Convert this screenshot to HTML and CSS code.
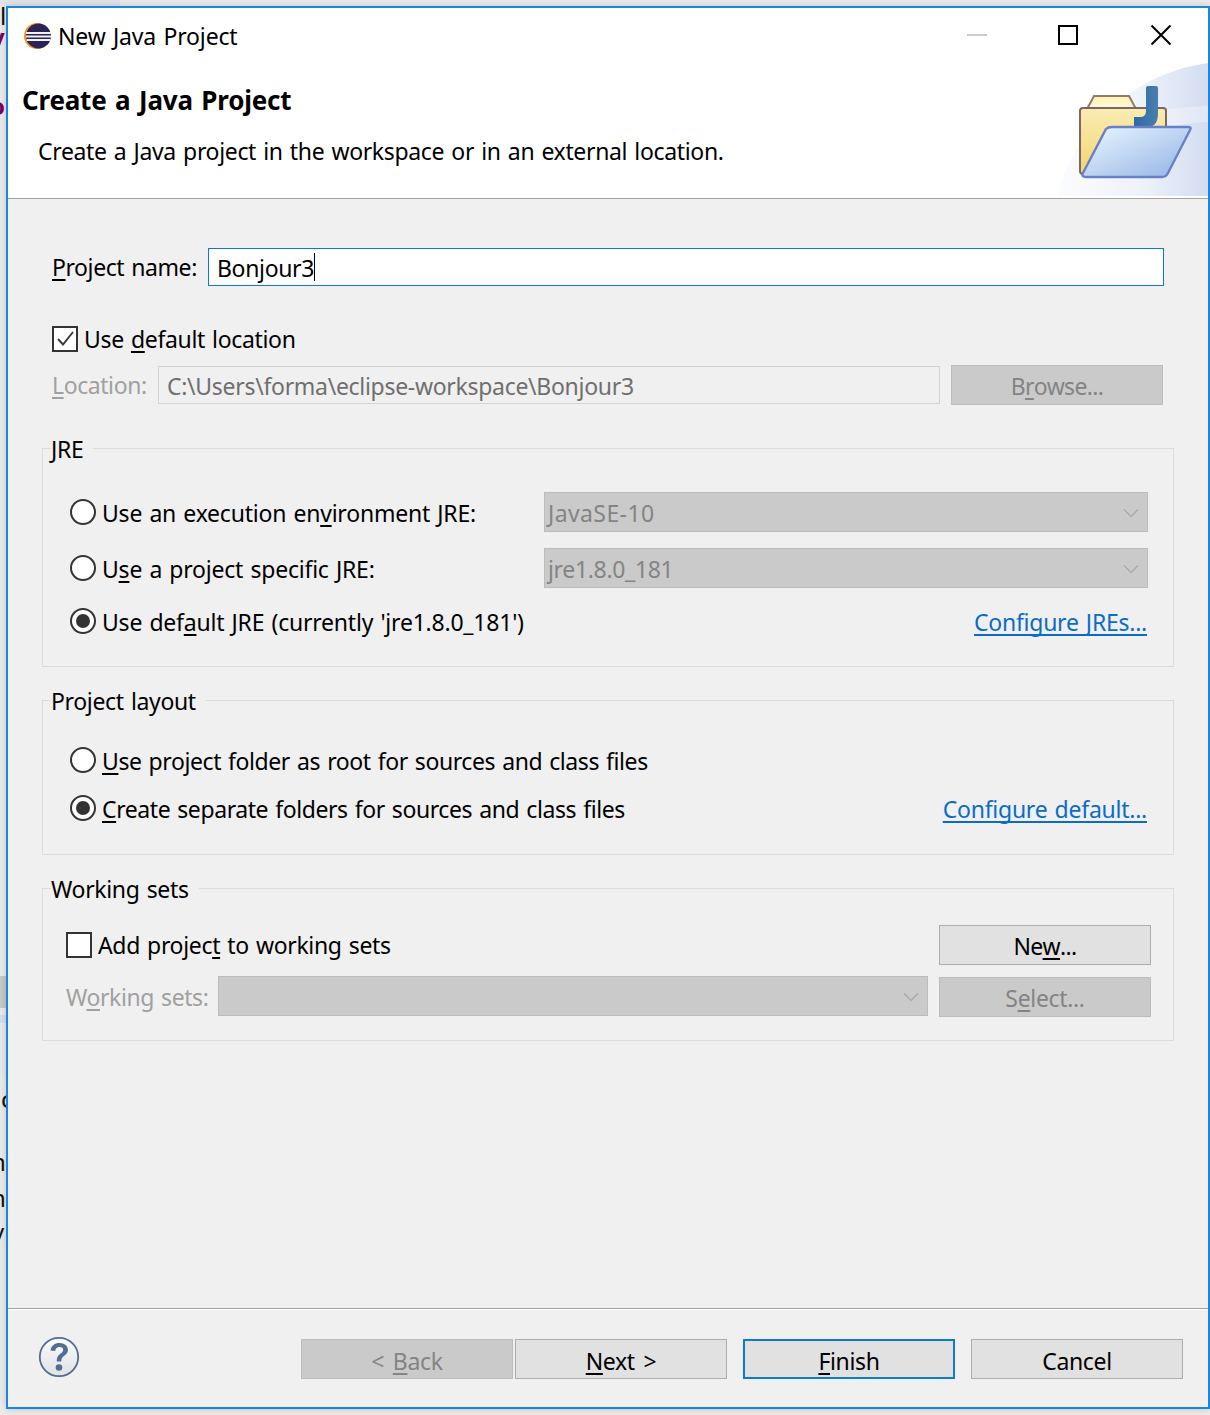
FILE: index.html
```html
<!DOCTYPE html>
<html lang="en">
<head>
<meta charset="utf-8">
<title>New Java Project</title>
<link rel="stylesheet" href="styles.css">
</head>
<body>
<div class="backdrop" aria-hidden="true">
  <div class="bd-top"></div>
  <span class="frag f1">l</span><span class="frag f2 purple">v</span><span class="frag f3 purple">o</span>
  <div class="bd-block b1"></div><div class="bd-block b2"></div><div class="bd-block b3"></div>
  <span class="frag f4">c</span><span class="frag f5">n</span><span class="frag f6">n</span><span class="frag f7">v</span>
</div>
<main class="window">
  <header class="head">
    <div class="titlebar">
      <svg class="app-icon" width="30" height="30" viewBox="0 0 30 30">
        <circle cx="14" cy="15" r="13" fill="#f7941e"/>
        <circle cx="15.500" cy="15" r="12.500" fill="#2c2255"/>
        <rect x="3" y="11" width="25" height="2" fill="#f2f0f8"/>
        <rect x="3" y="14.500" width="25" height="2" fill="#f2f0f8"/>
        <rect x="3.500" y="18" width="24" height="2" fill="#f2f0f8"/>
      </svg>
      <span class="title">New Java Project</span>
      <div class="controls">
        <svg class="ctl-min" width="22" height="22" viewBox="0 0 22 22"><rect x="1" y="10" width="20" height="2" fill="#cccccc"/></svg>
        <svg width="22" height="22" viewBox="0 0 22 22"><rect x="2" y="2" width="18" height="18" fill="none" stroke="#000" stroke-width="2"/></svg>
        <svg width="22" height="22" viewBox="0 0 22 22"><path d="M1.500 1.500L20.500 20.500M20.500 1.500L1.500 20.500" stroke="#000" stroke-width="2" fill="none"/></svg>
      </div>
    </div>
    <div class="banner">
      <div class="banner-text">
        <h1>Create a Java Project</h1>
        <p>Create a Java project in the workspace or in an external location.</p>
      </div>
      <svg class="wizard" width="154" height="134" viewBox="0 0 154 134">
        <defs>
          <linearGradient id="wash" x1="0" y1="0" x2="1" y2="0"><stop offset="0" stop-color="#fbfcfe"/><stop offset=".55" stop-color="#eef2fa"/><stop offset="1" stop-color="#d3ddf1"/></linearGradient>
          <linearGradient id="back" x1="0" y1="0" x2="0" y2="1"><stop offset="0" stop-color="#faebb4"/><stop offset="1" stop-color="#f3d670"/></linearGradient>
          <linearGradient id="front" x1="0" y1="0" x2="1" y2="1"><stop offset="0" stop-color="#eaf7ff"/><stop offset="1" stop-color="#93b3e4"/></linearGradient>
          <linearGradient id="tab" x1="0" y1="0" x2="0" y2="1"><stop offset="0" stop-color="#fff0a8"/><stop offset="1" stop-color="#fffbe4"/></linearGradient>
          <linearGradient id="jay" x1="0" y1="0" x2="1" y2="0"><stop offset="0" stop-color="#2b6aa2"/><stop offset="1" stop-color="#4a7eae"/></linearGradient>
        </defs>
        <path d="M4 134C10 92 60 14 154 1V134Z" fill="url(#wash)"/>
        <path d="M60 62C90 50 120 45 154 44V60C118 60 84 74 60 98Z" fill="#fff" opacity=".3"/>
        <path d="M33 47L40 34H75L82 47Z" fill="url(#tab)" stroke="#8e7a6e" stroke-width="2"/>
        <path d="M29 46H109Q112 46 112 49V112H29Q26 112 26 109V49Q26 46 29 46Z" fill="url(#back)" stroke="#7b675f" stroke-width="2"/>
        <path d="M80 66V55H86Q92 55 92 49V26Q92 24 94 24H102Q104 24 104 26V52Q104 66 90 66Z" fill="url(#jay)"/>
        <path d="M52 67Q54 65 58 65H134Q138 65 136 68L114 111Q112 115 108 115H32Q27 115 29 111Z" fill="url(#front)" stroke="#6a7fc8" stroke-width="2.400"/>
      </svg>
    </div>
  </header>

  <div class="body">
    <div class="name-row">
      <label class="lbl"><u>P</u>roject name:</label>
      <div class="name-input"><span>Bonjour3</span><span class="caret"></span></div>
    </div>

    <div class="check-row top-check">
      <span class="check"><svg width="20" height="20" viewBox="0 0 20 20"><path d="M3 10L8 15.500L18 3" fill="none" stroke="#3a3a3a" stroke-width="2"/></svg></span>
      <span class="check-text">Use <u>d</u>efault location</span>
    </div>

    <div class="loc-row">
      <span class="lbl off"><u>L</u>ocation:</span>
      <div class="loc-input">C:\Users\forma\eclipse-workspace\Bonjour3</div>
      <div class="btn disabled tight">B<u>r</u>owse...</div>
    </div>

    <fieldset class="group jre">
      <legend>JRE</legend>
      <div class="opt-row r1">
        <span class="radio"></span><span class="opt-text">Use an execution en<u>v</u>ironment JRE:</span>
        <div class="combo"><span class="java-label">JavaSE-10</span><svg width="16" height="10" viewBox="0 0 16 10"><path d="M1 1.500L8 8.500L15 1.500" fill="none" stroke="#a6a6a6" stroke-width="1.200"/></svg></div>
      </div>
      <div class="opt-row r2">
        <span class="radio"></span><span class="opt-text">U<u>s</u>e a project specific JRE:</span>
        <div class="combo"><span>jre1.8.0_181</span><svg width="16" height="10" viewBox="0 0 16 10"><path d="M1 1.500L8 8.500L15 1.500" fill="none" stroke="#a6a6a6" stroke-width="1.200"/></svg></div>
      </div>
      <div class="opt-row r3 spread">
        <span class="radio on"></span><span class="opt-text">Use def<u>a</u>ult JRE (currently 'jre1.8.0_181')</span>
        <a class="link">Configure JREs...</a>
      </div>
    </fieldset>

    <fieldset class="group layout">
      <legend>Project layout</legend>
      <div class="opt-row r4">
        <span class="radio"></span><span class="opt-text"><u>U</u>se project folder as root for sources and class files</span>
      </div>
      <div class="opt-row r5 spread">
        <span class="radio on"></span><span class="opt-text"><u>C</u>reate separate folders for sources and class files</span>
        <a class="link">Configure default...</a>
      </div>
    </fieldset>

    <fieldset class="group sets">
      <legend>Working sets</legend>
      <div class="sets-row">
        <div class="check-row"><span class="check"></span><span>Add projec<u>t</u> to working sets</span></div>
        <div class="btn normal tight">Ne<u>w</u>...</div>
      </div>
      <div class="sets-row second">
        <span class="lbl off">W<u>o</u>rking sets:</span>
        <div class="combo wide"><span></span><svg width="16" height="10" viewBox="0 0 16 10"><path d="M1 1.500L8 8.500L15 1.500" fill="none" stroke="#a6a6a6" stroke-width="1.200"/></svg></div>
        <div class="btn disabled">S<u>e</u>lect...</div>
      </div>
    </fieldset>
  </div>

  <footer class="foot">
    <svg class="help" width="42" height="42" viewBox="0 0 42 42">
      <defs><linearGradient id="hg" x1="0" y1="0" x2="0" y2="1"><stop offset="0" stop-color="#fbfbfc"/><stop offset="1" stop-color="#dfe1e5"/></linearGradient></defs>
      <circle cx="21" cy="21" r="19.200" fill="url(#hg)" stroke="#536c92" stroke-width="1.800"/>
      <path d="M12.500 14.500C13 9.500 17 7 21.500 7C26.500 7 30 10 30 13.800C30 17 28 18.500 26 20C24 21.500 23.300 22.500 23.300 25.500H18.800C18.800 21.500 19.500 20 22 18C24 16.500 25.200 15.500 25.200 14C25.200 12.200 23.800 11 21.500 11C19 11 17.500 12.500 17.200 15Z" fill="#536c92"/>
      <circle cx="21" cy="31.500" r="3.300" fill="#536c92"/>
    </svg>
    <div class="foot-btns">
      <div class="btn disabled"><span>&lt; <u>B</u>ack</span></div>
      <div class="btn normal next"><u>N</u>ext &gt;</div>
      <div class="btn primary"><u>F</u>inish</div>
      <div class="btn normal">Cancel</div>
    </div>
  </footer>
</main>
</body>
</html>
```
FILE: styles.css
```css
* { box-sizing: border-box; }
html, body { margin: 0; height: 100%; }
body {
  width: 1210px;
  height: 1415px;
  overflow: hidden;
  position: relative;
  background: #e4e4e4;
  font-family: "Noto Sans", "Open Sans", sans-serif;
  font-size: 23px;
  letter-spacing: -.34px;
  word-spacing: 1.5px;
  color: #000;
  padding: 6px 0 6px 6px;
}
u { text-underline-offset: 3px; text-decoration-thickness: 1.500px; text-decoration-skip-ink: none; }

.backdrop { position: absolute; inset: 0; background: #ececec; }
.bd-top { position: absolute; left: 0; top: 0; width: 120px; height: 6px; background: #e1e5ea; }
.frag { position: absolute; left: 0; font-size: 24px; line-height: 24px; color: #111; }
.purple { color: #7f0055; font-weight: 700; }
.f1 { top: 4px; }
.f2 { top: 25px; left: -9px; }
.f3 { top: 94px; left: -10px; }
.f4 { top: 1087px; left: 1px; }
.f5 { top: 1150px; left: -9px; }
.f6 { top: 1186px; left: -9px; }
.f7 { top: 1220px; left: -8px; }
.bd-block { position: absolute; left: 0; width: 6px; }
.b1 { top: 976px; height: 32px; background: #c9c9c9; }
.b2 { top: 1015px; height: 8px; background: #d8dfee; }
.b3 { top: 1023px; height: 52px; background: #e9e9ef; }

.window {
  position: relative;
  width: 1204px;
  height: 1403px;
  border: 2px solid #1c86de;
  background: #f0f0f0;
  display: flex;
  flex-direction: column;
  box-shadow: 0 0 8px rgba(0,0,0,.18);
}

.head { height: 191px; flex: none; background: #fff; border-bottom: 1px solid #a3a3a3; display: flex; flex-direction: column; }
.titlebar { height: 57px; flex: none; display: flex; align-items: center; padding: 0 36px 0 15px; }
.app-icon { flex: none; margin-right: 5px; margin-top: -1px; }
.title { margin-top: -1px; letter-spacing: -.15px; }
.controls { margin-left: auto; display: flex; gap: 71px; margin-top: -4px; }
.ctl-min { margin-right: -2px; }
.banner { flex: 1; display: flex; justify-content: space-between; position: relative; padding-left: 14px; }
.banner-text { padding-top: 15px; }
h1 { margin: 0; font-size: 26px; font-weight: 700; line-height: 40px; letter-spacing: -.2px; word-spacing: 2px; }
.banner p { margin: 11px 0 0 16px; line-height: 40px; }
.wizard { position: absolute; right: 0; bottom: 2px; }

.body { flex: 1; padding: 0 34px; border-bottom: 1px solid #a3a3a3; position: relative; }
.lbl { white-space: nowrap; letter-spacing: -.42px; }
.off { color: #a0a0a0; }
.name-row { display: flex; align-items: center; height: 38px; margin-top: 49px; padding-left: 10px; }
.name-row .lbl { width: 156px; flex: none; }
.name-input {
  width: 956px; height: 38px; flex: none;
  border: 1px solid #0f78d4; background: #fff; padding: 2px 0 0 8px;
  display: flex; align-items: center;
}
.caret { width: 1px; height: 28px; background: #000; margin: -2px 0 0 0; }

.check-row { display: flex; align-items: center; gap: 6px; white-space: nowrap; }
.top-check { margin: 40px 0 0 10px; height: 26px; }
.check {
  width: 26px; height: 26px; flex: none; border: 2px solid #333; background: #fff;
  display: flex; align-items: center; justify-content: center;
}

.loc-row { display: flex; align-items: center; height: 40px; margin-top: 13px; padding-left: 10px; }
.loc-row .lbl { width: 106px; flex: none; }
.loc-input {
  width: 782px; height: 38px; flex: none; border: 1px solid #d3d3d3; background: #f0f0f0;
  padding-left: 8px; color: #6f6f6f; line-height: 38px; white-space: nowrap; letter-spacing: -.3px;
}
.loc-row .btn { margin-left: 11px; }

.btn {
  width: 212px; height: 40px; flex: none; display: flex; align-items: center; justify-content: center;
  border: 1px solid #adadad; background: #e1e1e1; white-space: nowrap; padding-top: 2px;
}
.btn.tight { letter-spacing: -.65px; }
.btn.disabled { background: #cacaca; border-color: #bcbcbc; color: #848484; }
.btn.primary { border: 2px solid #0f78d4; }

.group {
  margin: 0; min-width: 0; padding: 0; width: 1132px;
  border: 1px solid #dcdcdc; position: relative;
}
legend { margin-left: 8px; padding: 0 10px 0 0; line-height: 32px; transform: translateY(1px); }
.jre { height: 235px; margin-top: 27px; padding-top: 28px; }
.layout { height: 171px; margin-top: 17px; padding-top: 11px; }
.sets { height: 169px; margin-top: 17px; padding-top: 21px; }

.opt-row { display: flex; align-items: center; padding-left: 27px; white-space: nowrap; }
.opt-text { margin-left: 6px; padding-top: 2px; }
.r1 .opt-text, .r2 .opt-text, .r3 .opt-text { letter-spacing: -.22px; }
.r4 .opt-text, .r5 .opt-text { letter-spacing: -.42px; }
.radio {
  width: 26px; height: 26px; flex: none; border-radius: 50%; border: 2px solid #333; background: #fff;
  position: relative;
}
.radio.on::after { content: ""; position: absolute; inset: 4px; border-radius: 50%; background: #333; }
.combo {
  width: 604px; height: 40px; flex: none; background: #cacaca; border: 1px solid #bcbcbc; color: #848484;
  display: flex; align-items: center; justify-content: space-between; padding: 2px 8px 0 3px;
  position: absolute; left: 501px;
}
.java-label { letter-spacing: .4px; }
.combo.wide { position: static; width: 710px; margin: -2px 0 0 10px; }
.r1, .r2 { height: 40px; }
.r2 { margin-top: 16px; }
.r3 { height: 26px; margin-top: 20px; }
.spread { padding-right: 26px; }
.link { margin-left: auto; color: #0a6cc9; text-decoration: underline; text-underline-offset: 3px; text-decoration-thickness: 1.500px; text-decoration-skip-ink: none; letter-spacing: -.25px; padding-top: 2px; }
.r4 { height: 26px; margin-top: 20px; }
.r5 { height: 26px; margin-top: 22px; }

.sets-row { display: flex; align-items: center; justify-content: space-between; padding: 0 22px 0 23px; height: 40px; }
.sets-row.second { justify-content: flex-start; margin-top: 12px; }
.sets-row.second .lbl { width: 142px; flex: none; }
.sets-row.second .btn { margin-left: 11px; }

.foot {
  height: 98px; flex: none; border-top: 1px solid #fff; display: flex; align-items: flex-start;
  padding: 26px 25px 0 30px; justify-content: space-between;
}
.foot-btns { display: flex; padding-top: 3px; word-spacing: 3px; }
.foot-btns .btn { padding-top: 4px; }
.next { margin-left: 2px; }
.primary { margin-left: 16px; }
.foot-btns .primary + .btn { margin-left: 16px; }
```
